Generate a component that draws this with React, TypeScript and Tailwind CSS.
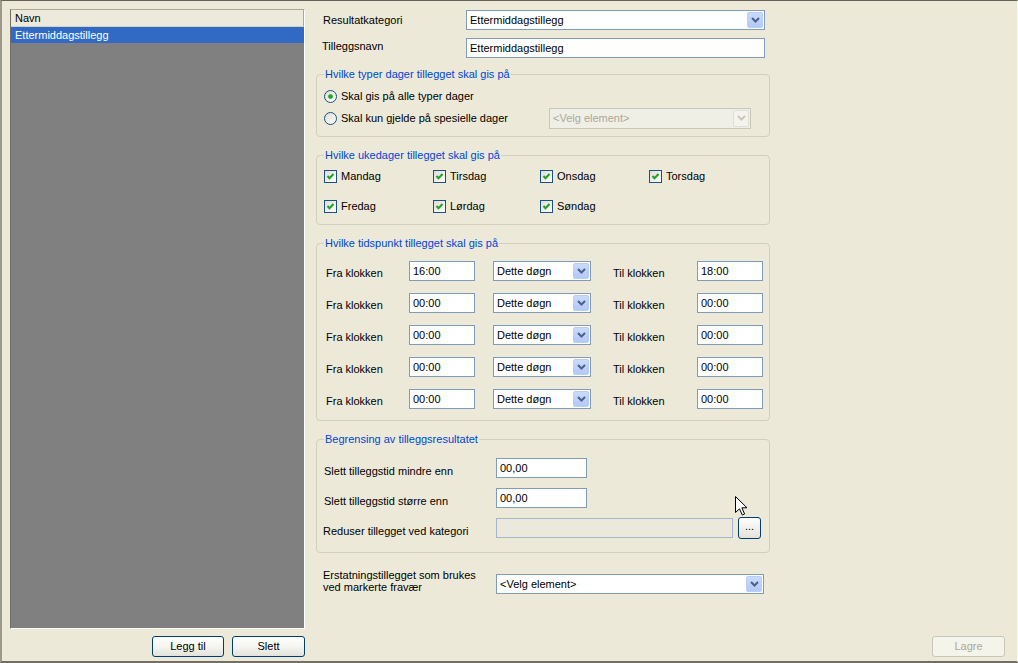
import React from 'react';
import clsx from 'clsx';

const font = "font-['Liberation_Sans',Arial,sans-serif]";

function Combo({ value, className, disabled }: { value: string; className?: string; disabled?: boolean }) {
  return (
    <div
      className={clsx(
        'flex items-stretch border p-[1px] shrink-0',
        disabled ? 'border-[#c9c7ba] bg-[#f0efe6] text-[#aca899]' : 'border-[#7f9db9] bg-white text-black',
        className
      )}
    >
      <span className="flex-1 flex items-center pl-[2px] whitespace-nowrap overflow-hidden">{value}</span>
      <span
        className={clsx(
          'w-[16px] rounded-[2px] flex items-center justify-center',
          disabled ? 'bg-[#f4f3ee] border border-[#e0dfd6]' : 'bg-linear-to-b from-[#c9dafd] to-[#b3c8f5] border border-[#bccdf5]'
        )}
      >
        <svg width="9" height="6" viewBox="0 0 9 6">
          <path d="M1 1 L4.5 4.5 L8 1" stroke={disabled ? '#c9c7ba' : '#4d6185'} strokeWidth="2" fill="none" />
        </svg>
      </span>
    </div>
  );
}

function TextBox({ value, className, disabled }: { value?: string; className?: string; disabled?: boolean }) {
  return (
    <div
      className={clsx(
        'border border-[#7f9db9] flex items-center pl-[3px] shrink-0 whitespace-nowrap',
        disabled ? 'bg-[#ebe9dc] border-[#a5b6cb]' : 'bg-white',
        className
      )}
    >
      {value}
    </div>
  );
}

function Radio({ checked }: { checked?: boolean }) {
  return (
    <span className="w-[13px] h-[13px] shrink-0 rounded-full border border-[#1c5180] bg-linear-to-br from-[#dcdcd7] to-white flex items-center justify-center">
      {checked && <span className="w-[5px] h-[5px] rounded-full bg-[#21a121] border border-[#31b531]" />}
    </span>
  );
}

function Check({ label, className }: { label: string; className?: string }) {
  return (
    <div className={clsx('flex items-center', className)}>
      <span className="w-[13px] h-[13px] shrink-0 border border-[#1c5180] bg-linear-to-br from-[#dcdcd7] to-white flex items-center justify-center">
        <svg width="9" height="9" viewBox="0 0 9 9">
          <path d="M1.5 4 L3.5 6.3 L7.5 2" stroke="#21a121" strokeWidth="2" fill="none" />
        </svg>
      </span>
      <span className="ml-[4px]">{label}</span>
    </div>
  );
}

function Group({ title, className, children }: { title: string; className?: string; children: React.ReactNode }) {
  return (
    <fieldset className={clsx('border border-[#d0d0bf] rounded-[4px] w-[454px] min-w-0', className)}>
      <legend className="ml-[7px] px-[1px] text-[#0046d5] leading-[13px]">{title}</legend>
      {children}
    </fieldset>
  );
}

function XpButton({ label, className, disabled }: { label: string; className?: string; disabled?: boolean }) {
  return (
    <button
      className={clsx(
        'h-[21px] rounded-[3px] border text-[11px] leading-none',
        disabled
          ? 'border-[#c9c7ba] bg-[#f5f4ea] text-[#aca899]'
          : 'border-[#003c74] bg-linear-to-b from-white via-[#f4f4f0] to-[#e3e2da] text-black',
        className
      )}
    >
      {label}
    </button>
  );
}

const times = ['16:00', '00:00', '00:00', '00:00', '00:00'];
const tilTimes = ['18:00', '00:00', '00:00', '00:00', '00:00'];

export default function App() {
  return (
    <div
      className={clsx(
        'relative flex w-[1018px] h-[663px] bg-[#ece9d8] text-[11px] text-black border-t border-l-2 border-b-2 border-r border-t-[#646358] border-l-[#9d9a8c] border-b-[#716f64] border-r-[#f7f6f1]',
        font
      )}
    >
      {/* Liste */}
      <div className="ml-[8px] mt-[8px] w-[295px] flex flex-col">
        <div className="h-[620px] border border-t-[#aca899] border-l-[#716f64] border-r-white border-b-white bg-[#808080] flex flex-col">
          <div className="h-[17px] bg-[#ebeadb] border-b border-r border-b-[#d6d2c2] border-r-[#aca899] pl-[4px] flex items-center">Navn</div>
          <div className="h-[16px] bg-[#316ac5] text-white pl-[4px] flex items-center">Ettermiddagstillegg</div>
        </div>
        <div className="mt-[7px] flex justify-end gap-[8px]">
          <XpButton label="Legg til" className="w-[72px]" />
          <XpButton label="Slett" className="w-[73px]" />
        </div>
      </div>

      {/* Detaljer */}
      <div className="ml-[11px] w-[454px] flex flex-col pt-[9px]">
        <div className="flex items-center h-[20px]">
          <span className="w-[150px] pl-[7px]">Resultatkategori</span>
          <Combo value="Ettermiddagstillegg" className="w-[299px] h-[20px]" />
        </div>
        <div className="flex items-center h-[20px] mt-[8px]">
          <span className="w-[150px] pl-[6px] pb-[4px]">Tilleggsnavn</span>
          <TextBox value="Ettermiddagstillegg" className="w-[299px] h-[20px]" />
        </div>

        <Group title="Hvilke typer dager tillegget skal gis på" className="mt-[10px]">
          <div className="flex flex-col pt-[4px] pb-[7px] pl-[7px]">
            <div className="flex items-center h-[22px]">
              <Radio checked />
              <span className="ml-[4px]">Skal gis på alle typer dager</span>
            </div>
            <div className="flex items-center h-[22px]">
              <Radio />
              <span className="ml-[4px] flex-1">Skal kun gjelde på spesielle dager</span>
              <Combo disabled value="<Velg element>" className="w-[202px] h-[21px] mr-[18px]" />
            </div>
          </div>
        </Group>

        <Group title="Hvilke ukedager tillegget skal gis på" className="mt-[12px]">
          <div className="flex flex-col gap-[9px] pt-[4px] pb-[7px] pl-[7px]">
            <div className="flex items-center h-[21px]">
              <Check label="Mandag" className="w-[109px]" />
              <Check label="Tirsdag" className="w-[107px]" />
              <Check label="Onsdag" className="w-[109px]" />
              <Check label="Torsdag" />
            </div>
            <div className="flex items-center h-[21px]">
              <Check label="Fredag" className="w-[109px]" />
              <Check label="Lørdag" className="w-[107px]" />
              <Check label="Søndag" />
            </div>
          </div>
        </Group>

        <Group title="Hvilke tidspunkt tillegget skal gis på" className="mt-[12px]">
          <div className="flex flex-col gap-[12px] pt-[11px] pb-[11px] pl-[9px]">
            {times.map((t, i) => (
              <div key={i} className="flex items-center h-[20px]">
                <span className="w-[83px] pt-[5px]">Fra klokken</span>
                <TextBox value={t} className="w-[66px] h-[20px]" />
                <Combo value="Dette døgn" className="w-[98px] h-[20px] ml-[18px]" />
                <span className="w-[106px] pl-[22px] pt-[5px]">Til klokken</span>
                <TextBox value={tilTimes[i]} className="w-[66px] h-[20px]" />
              </div>
            ))}
          </div>
        </Group>

        <Group title="Begrensing av tilleggsresultatet" className="mt-[12px]">
          <div className="flex flex-col gap-[8px] pt-[11px] pb-[13px]">
            <div className="flex items-center h-[22px]">
              <span className="w-[179px] pl-[7px] pt-[6px]">Slett tilleggstid mindre enn</span>
              <TextBox value="00,00" className="w-[91px] h-[20px]" />
            </div>
            <div className="flex items-center h-[22px]">
              <span className="w-[179px] pl-[7px] pt-[6px]">Slett tilleggstid større enn</span>
              <TextBox value="00,00" className="w-[91px] h-[20px]" />
            </div>
            <div className="flex items-center h-[22px]">
              <span className="w-[179px] pl-[6px] pt-[6px]">Reduser tillegget ved kategori</span>
              <TextBox disabled className="w-[237px] h-[20px]" />
              <button className="ml-[5px] w-[23px] h-[22px] rounded-[3px] border border-[#003c74] bg-linear-to-b from-white to-[#e3e2da] text-[11px] leading-none pb-[3px]">
                ...
              </button>
            </div>
          </div>
        </Group>

        <div className="flex items-start mt-[16px]">
          <span className="w-[180px] pl-[7px] leading-[12px]">
            Erstatningstillegget som brukes
            <br />
            ved markerte fravær
          </span>
          <Combo value="<Velg element>" className="w-[268px] h-[20px] mt-[5px]" />
        </div>
      </div>

      {/* Lagre */}
      <div className="flex-1 flex items-end justify-end pr-[12px] pb-[4px]">
        <XpButton label="Lagre" disabled className="w-[73px]" />
      </div>

      {/* musepeker */}
      <svg className="absolute left-[733px] top-[495px]" width="13" height="20" viewBox="0 0 13 20">
        <path d="M0.5 0.5 L0.5 16.5 L4.5 12.8 L7.3 19 L9.6 18 L6.9 11.8 L12 11.8 Z" fill="white" stroke="black" strokeWidth="1" />
      </svg>
    </div>
  );
}
